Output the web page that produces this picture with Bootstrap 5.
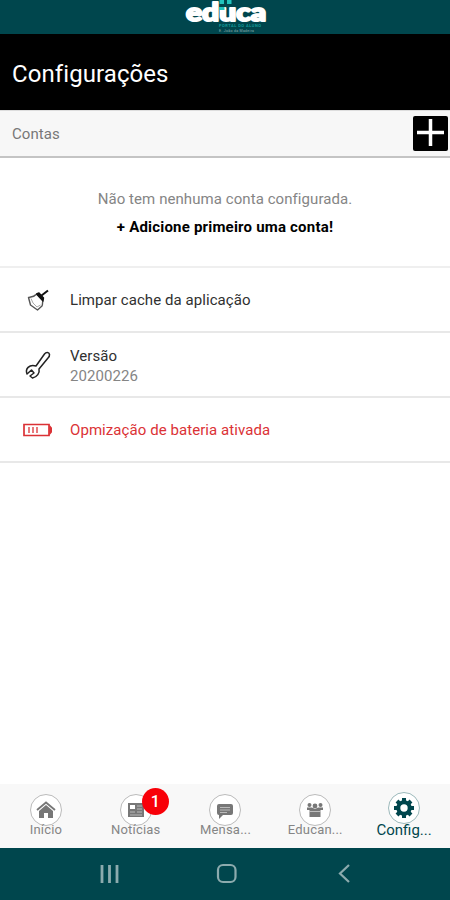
<!DOCTYPE html>
<html lang="pt">
<head>
<meta charset="utf-8">
<meta name="viewport" content="width=device-width, initial-scale=1">
<title>Configurações</title>
<link href="https://cdn.jsdelivr.net/npm/bootstrap@5.3.0/dist/css/bootstrap.min.css" rel="stylesheet">
<style>
body{font-family:Roboto,sans-serif;font-size:15px;line-height:20px;color:#303030}
.screen{height:900px}
.brandbar{height:34px;background:#00464d}
.titlebar{height:76px;background:#000}
.titlebar h1{font-size:24px;line-height:32px;letter-spacing:.08px;margin-top:4px}
.accounts{height:48px;background:#f7f7f7;border-top:1px solid #ddd;border-bottom:2px solid #c4c4c4;padding-right:2px;letter-spacing:.05px;color:#777}
.add{width:35px;height:35px;background:#000;border-radius:2px}
.empty{height:110px;padding-top:31px;border-bottom:2px solid #efefef;color:#858585}
.empty p{line-height:20px;margin-bottom:8px;letter-spacing:.07px}
.empty a{color:#000;letter-spacing:.2px}
.list-group-flush>.entry.list-group-item{height:65px;border:0;border-bottom:2px solid #e8e8e8;padding:0 0 0 23px;color:#303030;letter-spacing:.07px}
.entry svg{width:30px;height:30px;margin-right:17px}
.version{padding-top:2px}
.grey{color:#858585}
.list-group-flush>.entry.list-group-item.alert-red{color:#db3236}
.tabs{height:64px;background:#f8f8f8;padding:10px 0 0 1px}
.tab{width:89.8px;font-size:13px;line-height:14px;color:#858585;letter-spacing:.2px}
.ring{width:32px;height:32px;border:1.5px solid #bbb;border-radius:50%;background:#fff}
.tab span.cap{margin-top:-3px;position:relative}
.tab.on{color:#00464d;font-size:15px;margin-left:-1px;letter-spacing:0}
.tab.on .ring{margin-top:-2px;border-color:#9cb9bb}
.tab.on span.cap{margin-top:-1px}
.count{left:51px;top:-6px;width:27px;height:27px;background:#f80008;font-size:16px;line-height:28px;letter-spacing:0}
.sysbar{height:52px;background:#00464d}
</style>
<script src="https://cdn.jsdelivr.net/npm/bootstrap@5.3.0/dist/js/bootstrap.bundle.min.js"></script>
</head>
<body>
<div class="screen d-flex flex-column bg-white overflow-hidden">
  <div class="brandbar d-flex justify-content-center">
    <svg width="92" height="34" viewBox="0 0 92 34">
      <text x="7" y="20.500" font-family="Lato,sans-serif" font-weight="900" font-size="24" textLength="80" lengthAdjust="spacingAndGlyphs" fill="#fff" stroke="#fff" stroke-width="2" stroke-linejoin="round">educa</text>
      <path d="M40 7h5.500v3h-5.500zM40.500 0h4.500v4h-4.500zM48 0h4.500v4h-4.500z" fill="#21c3bd"/>
      <text x="40" y="26.500" font-family="Roboto,sans-serif" font-weight="700" font-size="4" textLength="42" fill="#139b99">PORTAL DO ALUNO</text>
      <text x="40" y="31.500" font-family="Roboto,sans-serif" font-size="3.500" textLength="35" fill="#8eaeb1">E. João da Madeira</text>
    </svg>
  </div>
  <header class="titlebar d-flex align-items-center ps-2"><h1 class="ms-1 mb-0 text-white fw-normal">Configurações</h1></header>
  <div class="accounts d-flex align-items-center justify-content-between"><span class="ps-2 ms-1">Contas</span>
    <button class="add btn p-0 border-0 d-flex" aria-label="Adicionar"><svg width="35" height="35"><path d="M4 16.500H31M17.500 3V30" stroke="#fff" stroke-width="3.500"/></svg></button>
  </div>
  <section class="empty text-center"><p>Não tem nenhuma conta configurada.</p><a class="text-decoration-none fw-bold">+ Adicione primeiro uma conta!</a></section>
  <div class="list-group list-group-flush flex-grow-1">
    <div class="entry list-group-item d-flex align-items-center">
      <svg viewBox="0 0 30 30" fill="none" stroke="#555" stroke-width="1.400" stroke-linejoin="round"><path d="M13 9.500C11 12 8 12 5.500 12.500L7.500 20L14.500 25L19 21C20 19 19 18 20 16"/><path d="M8 13.500L10 18L14 22L17.500 20" stroke="#aaa" stroke-width="1"/><path d="M13.500 9L16 8L20.500 13L20 16Z" fill="#111" stroke="#111"/><path d="M18.500 10.500L25 5.500" stroke="#111" stroke-width="2"/></svg>
      <span>Limpar cache da aplicação</span>
    </div>
    <div class="entry list-group-item d-flex align-items-center">
      <svg viewBox="0 0 30 30" fill="none" stroke="#222" stroke-width="1.500" stroke-linejoin="round"><path d="M13 16L21.500 4C23 2 26 2 26.500 4.500C26.700 6 26 7 25 8L16 19C17 23 14 27 9.500 28L7 26L11 23L8.500 20L4 24C2 19 6 14 13 16Z"/></svg>
      <span class="version d-flex flex-column"><span>Versão</span><span class="grey">20200226</span></span>
    </div>
    <div class="entry alert-red list-group-item d-flex align-items-center">
      <svg viewBox="0 0 30 30" fill="none" stroke="#db3236"><path d="M1 9.500H26V20.500H1Z" stroke-width="1.700"/><path d="M6 12v6M10 12v6M14 12v6" stroke-width="1.300"/><path d="M27 11.500L28.300 13V17L27 18.500Z" stroke-width="1.400"/></svg>
      <span>Opmização de bateria ativada</span>
    </div>
  </div>
  <nav class="tabs d-flex">
    <div class="tab d-flex flex-column align-items-center"><span class="ring d-flex"><svg class="m-auto" width="20" height="18" fill="#777"><path d="M10 4L17 10V17H12V12H8V17H3V10Z"/><path d="M1 9L10 1.500L19 9" fill="none" stroke="#777" stroke-width="1.800"/></svg></span><span class="cap">Início</span></div>
    <div class="tab position-relative d-flex flex-column align-items-center"><span class="ring d-flex"><svg class="m-auto" width="18" height="16"><path d="M1 1H17V15H1Z" fill="#777"/><path d="M3 3h5v4H3z" fill="#fff"/><path d="M10 4h5M10 7h5M3 10h5M10 10h5M3 13h12" stroke="#bbb"/></svg></span><span class="cap">Notícias</span><span class="count badge rounded-circle p-0 position-absolute fw-medium">1</span></div>
    <div class="tab d-flex flex-column align-items-center"><span class="ring d-flex"><svg class="m-auto" width="18" height="17"><path d="M3 2H15Q17 2 17 4V11Q17 13 15 13H7L3 17V13Q1 13 1 11V4Q1 2 3 2Z" fill="#777"/><path d="M4 5.500H14M4 8H14M4 10.500H11" stroke="#bbb"/></svg></span><span class="cap">Mensa...</span></div>
    <div class="tab d-flex flex-column align-items-center"><span class="ring d-flex"><svg class="m-auto" width="18" height="16" fill="#777"><circle cx="3.500" cy="3" r="2"/><circle cx="14.500" cy="3" r="2"/><circle cx="9" cy="4" r="2.400"/><path d="M1 5.500H6L9 7L12 5.500H17V8H14.500V15H3.500V8H1Z"/><path d="M3.500 9.500H14.500" stroke="#ddd" stroke-width=".7"/></svg></span><span class="cap">Educan...</span></div>
    <div class="tab on d-flex flex-column align-items-center"><span class="ring d-flex"><svg class="m-auto" width="22" height="22" viewBox="-11 -11 22 22"><circle r="5.700" fill="none" stroke="#00464d" stroke-width="4"/><path d="M0-10V-6M0 10V6M-10 0H-6M10 0H6M-7-7L-4-4M7 7L4 4M-7 7L-4 4M7-7L4-4" stroke="#00464d" stroke-width="4"/></svg></span><span class="cap">Config...</span></div>
  </nav>
  <div class="sysbar"><svg width="450" height="52" fill="none" stroke="#8cabae" stroke-width="2.200"><path d="M102 17V35M109.500 17V35M117 17V35" stroke-width="2.800"/><rect x="218" y="17" width="17.500" height="17" rx="5"/><path d="M349 17L340 25.500L349 34"/></svg></div>
</div>
</body>
</html>
